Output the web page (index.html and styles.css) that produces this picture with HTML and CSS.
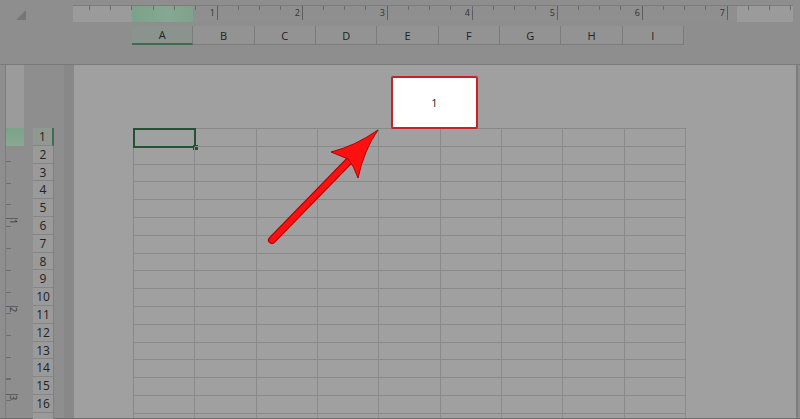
FILE: index.html
```html
<!DOCTYPE html>
<html lang="en">
<head>
    <meta charset="UTF-8">
    <meta name="viewport" content="width=device-width, initial-scale=1.0">
    <title>Page Layout - Sheet1</title>
    <link rel="stylesheet" href="styles.css">
</head>
<body>
<div class="app">

    <!-- Top: corner + horizontal ruler -->
    <div class="top-bar">
        <div class="corner"><span class="corner-tri"></span></div>
        <div class="hruler">
            <div class="hr-margin left"></div>
            <div class="hr-content">
                <div class="hr-sel"></div>
                <div class="hr-nums">
                    <span>1</span><span>2</span><span>3</span><span>4</span><span>5</span><span>6</span><span>7</span>
                </div>
            </div>
            <div class="hr-margin right"></div>
        </div>
    </div>

    <!-- Column headers -->
    <div class="col-heads">
        <div class="col-head selected">A</div>
        <div class="col-head">B</div>
        <div class="col-head">C</div>
        <div class="col-head">D</div>
        <div class="col-head">E</div>
        <div class="col-head">F</div>
        <div class="col-head">G</div>
        <div class="col-head">H</div>
        <div class="col-head">I</div>
    </div>

    <div class="main">
        <!-- Vertical ruler -->
        <div class="vruler">
            <div class="vr-margin"></div>
            <div class="vr-sel"></div>
            <div class="vr-body">
                <span class="vr-num">1</span>
                <span class="vr-num">2</span>
                <span class="vr-num">3</span>
            </div>
        </div>

        <!-- Row headers -->
        <div class="row-heads">
            <div class="row-head selected">1</div>
            <div class="row-head">2</div>
            <div class="row-head">3</div>
            <div class="row-head">4</div>
            <div class="row-head">5</div>
            <div class="row-head">6</div>
            <div class="row-head">7</div>
            <div class="row-head">8</div>
            <div class="row-head">9</div>
            <div class="row-head">10</div>
            <div class="row-head">11</div>
            <div class="row-head">12</div>
            <div class="row-head">13</div>
            <div class="row-head">14</div>
            <div class="row-head">15</div>
            <div class="row-head">16</div>
            <div class="row-head"></div>
        </div>

        <div class="gutter"></div>

        <!-- Printed page -->
        <div class="page">
            <div class="grid" id="grid"></div>
        </div>
    </div>

    <div class="bottom-line"></div>

    <!-- Callout and arrow drawn over the sheet -->
    <div class="callout">1</div>
    <svg class="arrow" width="800" height="419" viewBox="0 0 800 419">
        <line x1="272" y1="240" x2="350" y2="160" stroke="#b00000" stroke-width="8" stroke-linecap="round"/>
        <line x1="272" y1="240" x2="350" y2="160" stroke="#ff1010" stroke-width="5.5" stroke-linecap="round"/>
        <path d="M378,130 Q355,146 331,152 L348,159 Q354,166 358,178 Q364,150 378,130 Z" fill="#ff1010" stroke="#b00000" stroke-width="1"/>
    </svg>
</div>

<script>
    // fill the sheet grid: 9 columns x 17 rows
    const grid = document.getElementById("grid");
    for (let r = 0; r < 17; r++) {
        for (let c = 0; c < 9; c++) {
            const cell = document.createElement("div");
            cell.className = "cell";
            if (r === 0 && c === 0) cell.className = "cell active";
            grid.appendChild(cell);
        }
    }
</script>
</body>
</html>
```
FILE: styles.css
```css
/* General */
html, body {
    margin: 0;
    padding: 0;
    background-color: #8e8e8e;
    overflow: hidden;
}
.app {
    position: relative;
    width: 800px;
    height: 419px;
    font-family: "Open Sans", "Liberation Sans", sans-serif;
    color: #222;
    overflow: hidden;
}

/* Top bar with horizontal ruler */
.top-bar {
    display: flex;
    height: 26px;
    padding-top: 5px;
    box-sizing: border-box;
}
.corner {
    width: 73px;
    position: relative;
}
.corner-tri {
    position: absolute;
    left: 16px;
    top: 5px;
    width: 0;
    height: 0;
    border-left: 10px solid transparent;
    border-bottom: 10px solid #767676;
}
.hruler {
    position: relative;
    display: flex;
    width: 720px;
    height: 16px;
    border-top: 1px solid #7c7c7c;
}
/* tick marks along the top edge */
.hruler::after {
    content: "";
    position: absolute;
    left: 0;
    top: 0;
    right: 0;
    height: 4px;
    background: repeating-linear-gradient(to right, transparent 0 16px, #6a6a6a 16px 17px, transparent 17px 21.25px);
}
.hr-margin {
    background-color: #9b9b9b;
}
.hr-margin.left {
    width: 60px;
}
.hr-margin.right {
    width: 56px;
}
.hr-content {
    position: relative;
    width: 604px;
    background-color: #8f8f8f;
}
.hr-sel {
    position: absolute;
    left: -1px;
    top: 0;
    width: 61px;
    height: 16px;
    background: linear-gradient(to right, #7aa389, #86a892 60%, #7fa28b);
}
.hr-nums {
    position: relative;
    display: flex;
    height: 16px;
}
.hr-nums span {
    width: 85px;
    flex: none;
    box-sizing: border-box;
    text-align: right;
    padding-right: 2px;
    font-size: 9px;
    line-height: 14px;
    color: #333;
    border-right: 1px solid #5e5e5e;
    height: 14px;
}

/* Column headers */
.col-heads {
    display: flex;
    padding-left: 132px;
    height: 19px;
    margin-bottom: 19px;
}
.col-head {
    width: 61.33px;
    box-sizing: border-box;
    background-color: #939393;
    border-right: 1px solid #7b7b7b;
    border-bottom: 1px solid #7b7b7b;
    text-align: center;
    font-size: 11px;
    line-height: 19px;
}
.col-head.selected {
    background-color: #8a938d;
    border-bottom: 2px solid #3f6b50;
    line-height: 18px;
}

/* Main area */
.main {
    display: flex;
    height: 353px;
    border-top: 1px solid #7a7a7a;
}

/* Vertical ruler */
.vruler {
    width: 18px;
    margin-left: 5px;
    border-left: 1px solid #7c7c7c;
    display: flex;
    flex-direction: column;
}
.vr-margin {
    height: 63px;
    background-color: #9b9b9b;
}
.vr-sel {
    height: 18px;
    background: linear-gradient(to bottom, #7aa389, #8aa895);
}
.vr-body {
    flex: 1;
    position: relative;
    background: repeating-linear-gradient(to bottom, transparent 0 15px, #6d6d6d 15px 16px, transparent 16px 21.75px);
    background-size: 5px 100%;
    background-repeat: no-repeat;
}
.vr-num {
    position: absolute;
    left: 0;
    width: 10px;
    border-top: 1px solid #5e5e5e;
    font-size: 9px;
    line-height: 9px;
    color: #333;
    writing-mode: vertical-rl;
    padding-left: 2px;
}
.vr-num:nth-child(1) { top: 72px; }
.vr-num:nth-child(2) { top: 160px; }
.vr-num:nth-child(3) { top: 248px; }

/* Row headers */
.row-heads {
    width: 21px;
    margin-left: 9px;
    padding-top: 63px;
    display: flex;
    flex-direction: column;
}
.row-head {
    height: 17.8px;
    flex: none;
    box-sizing: border-box;
    background-color: #9a9a9a;
    border-bottom: 1px solid #858585;
    border-right: 1px solid #808080;
    text-align: center;
    font-size: 12px;
    line-height: 17px;
}
.row-head.selected {
    background-color: #8f9992;
    border-right: 2px solid #3f6b50;
}

.gutter {
    width: 20px;
    background: linear-gradient(to right, #8e8e8e 0 10px, #888 10px);
}

/* Page */
.page {
    width: 724px;
    background-color: #a0a0a0;
    border-right: 2px solid #7e7e7e;
    padding: 63px 0 0 59px;
    box-sizing: border-box;
    overflow: hidden;
}
.grid {
    display: grid;
    grid-template-columns: repeat(9, 61.33px);
    grid-auto-rows: 17.8px;
    width: 552px;
    border-left: 1px solid #888;
    border-top: 1px solid #888;
}
.cell {
    border-right: 1px solid #8a8a8a;
    border-bottom: 1px solid #8a8a8a;
    position: relative;
}
.cell.active {
    outline: 2px solid #245235;
    outline-offset: -1px;
}
.cell.active::after {
    content: "";
    position: absolute;
    right: -4px;
    bottom: -4px;
    width: 5px;
    height: 5px;
    background-color: #245235;
}

.bottom-line {
    height: 3px;
    background-color: #6e6e6e;
}

/* Callout over the sheet */
.callout {
    position: absolute;
    left: 391px;
    top: 76px;
    width: 87px;
    height: 53px;
    box-sizing: border-box;
    background-color: #fff;
    border: 2px solid #c7222a;
    border-radius: 2px;
    text-align: center;
    font-size: 11px;
    line-height: 49px;
    color: #222;
}
.arrow {
    position: absolute;
    left: 0;
    top: 0;
}
```
